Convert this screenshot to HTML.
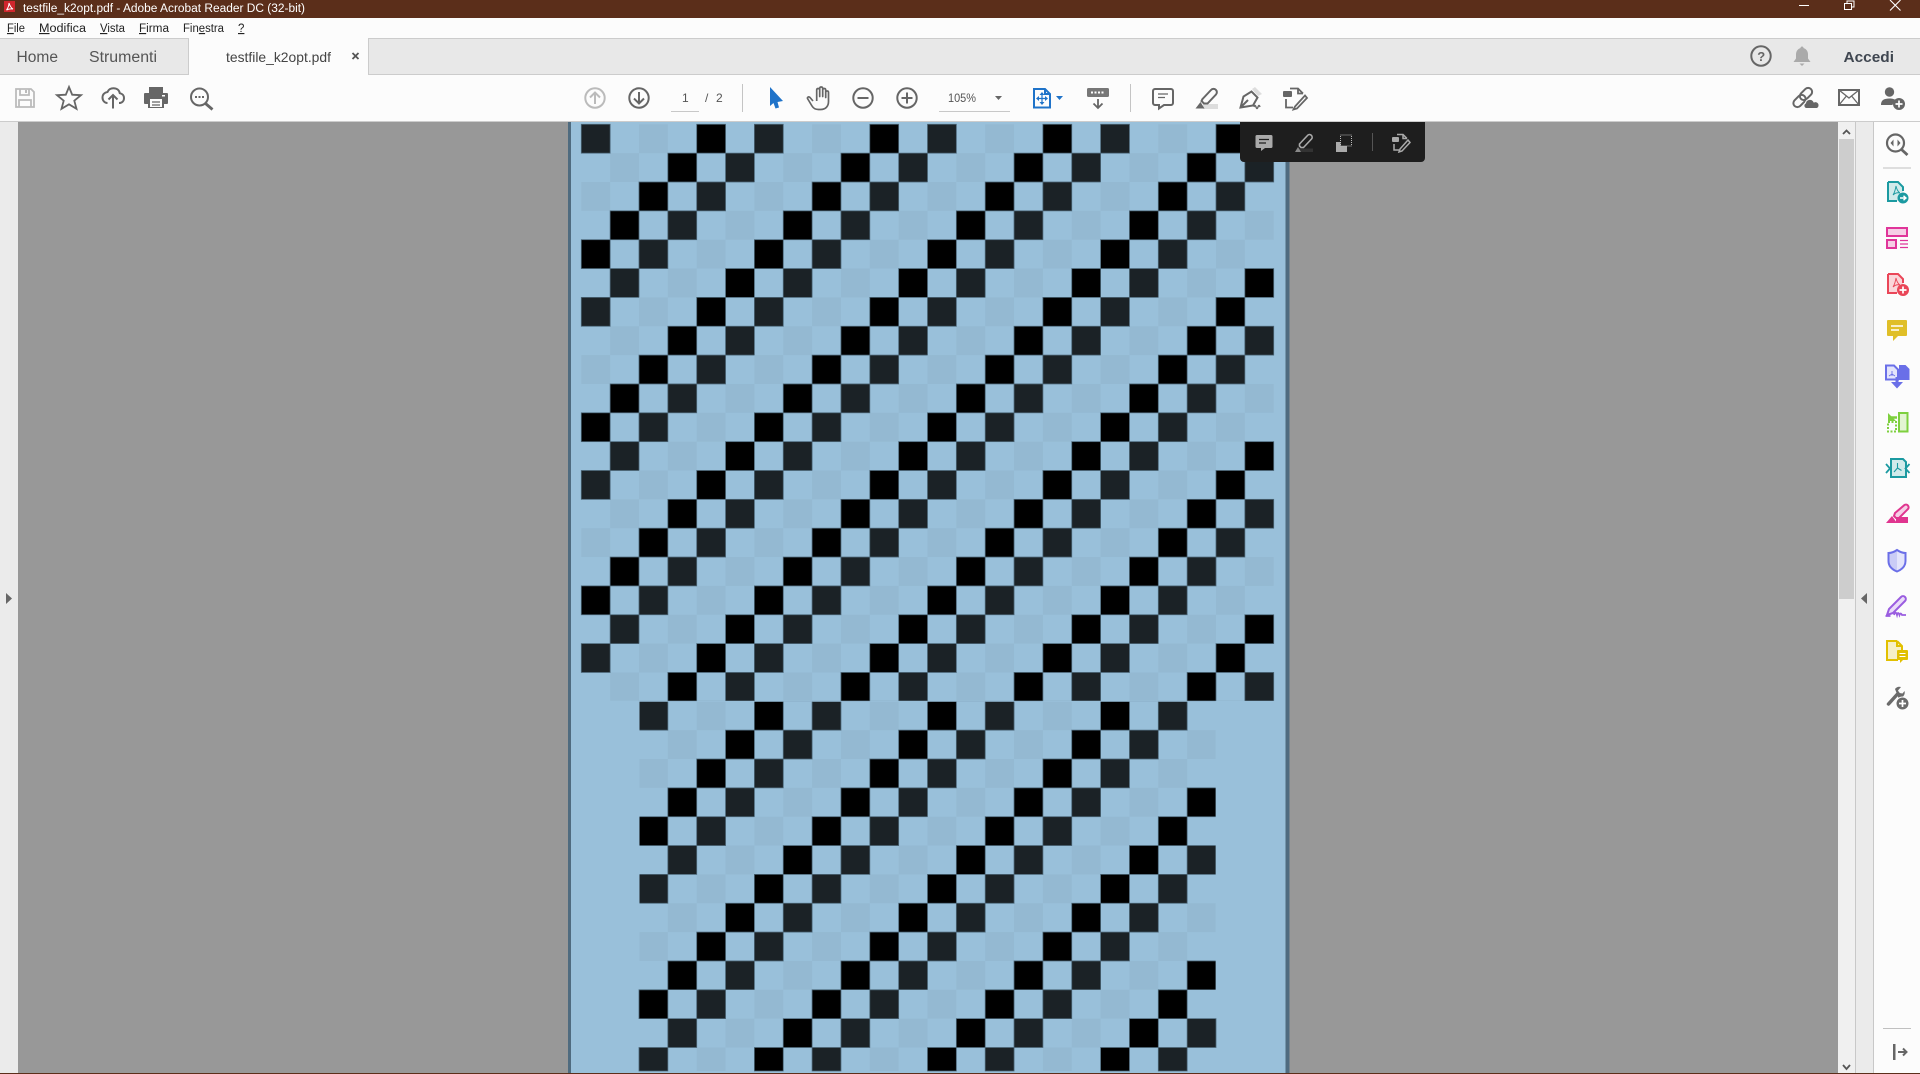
<!DOCTYPE html>
<html lang="it">
<head>
<meta charset="utf-8">
<title>testfile_k2opt.pdf - Adobe Acrobat Reader DC (32-bit)</title>
<style>
html,body{margin:0;padding:0;width:1920px;height:1074px;overflow:hidden;background:#989898}
svg{display:block;position:absolute;left:0;top:0}
text{font-family:"Liberation Sans",sans-serif;white-space:pre}
</style>
</head>
<body>
<svg xmlns="http://www.w3.org/2000/svg" width="1920" height="1074" viewBox="0 0 1920 1074">
<defs>
  <g id="d4"><rect x="115.4" y="0" width="28.85" height="28.85"/><rect x="86.55" y="28.85" width="28.85" height="28.85"/><rect x="57.7" y="57.7" width="28.85" height="28.85"/><rect x="28.85" y="86.55" width="28.85" height="28.85"/><rect x="0" y="115.4" width="28.85" height="28.85"/><rect x="144.25" y="144.25" width="28.85" height="28.85"/></g>
  <g id="d0"><rect x="0" y="0" width="28.85" height="28.85"/><rect x="144.25" y="28.85" width="28.85" height="28.85"/><rect x="115.4" y="57.7" width="28.85" height="28.85"/><rect x="86.55" y="86.55" width="28.85" height="28.85"/><rect x="57.7" y="115.4" width="28.85" height="28.85"/><rect x="28.85" y="144.25" width="28.85" height="28.85"/></g>
  <g id="d2"><rect x="57.7" y="0" width="28.85" height="28.85"/><rect x="28.85" y="28.85" width="28.85" height="28.85"/><rect x="0" y="57.7" width="28.85" height="28.85"/><rect x="144.25" y="86.55" width="28.85" height="28.85"/><rect x="115.4" y="115.4" width="28.85" height="28.85"/><rect x="86.55" y="144.25" width="28.85" height="28.85"/></g>
  <g id="t1"><use href="#d2" fill="#94b9d2"/><use href="#d4" fill="#000" stroke="#4c6677" stroke-width=".8"/><use href="#d0" fill="#1b2226" stroke="#4c6677" stroke-width=".8"/></g>
  <g id="t2"><use href="#d0" fill="#94b9d2"/><use href="#d2" fill="#000" stroke="#4c6677" stroke-width=".8"/><use href="#d4" fill="#1b2226" stroke="#4c6677" stroke-width=".8"/></g>
  <g id="r1"><use href="#t1"/><use href="#t1" x="173.1"/><use href="#t1" x="346.2"/><use href="#t1" x="519.3"/></g>
  <g id="r2"><use href="#t2"/><use href="#t2" x="173.1"/><use href="#t2" x="346.2"/><use href="#t2" x="519.3"/></g>
  <clipPath id="c1"><rect x="580" y="122" width="696" height="578.8"/></clipPath>
  <clipPath id="c2"><rect x="639.5" y="701.8" width="576.1" height="288"/></clipPath>
</defs>

<!-- viewer background -->
<rect x="0" y="0" width="1920" height="1074" fill="#989898"/>
<rect x="0" y="122" width="18" height="952" fill="#ebebeb"/>
<polygon points="6,593 12,598.500 6,604" fill="#666"/>

<!-- page -->
<rect x="568" y="122" width="721.500" height="952" fill="#4f6b7f"/>
<rect x="571" y="122" width="714.500" height="952" fill="#99c0da"/>
<g clip-path="url(#c1)">
  <use href="#r1" x="581.3" y="124.3"/><use href="#r1" x="581.3" y="297.4"/><use href="#r1" x="581.3" y="470.5"/><use href="#r1" x="581.3" y="643.6"/>
</g>
<g clip-path="url(#c2)">
  <use href="#r2" x="581.3" y="643.6"/><use href="#r2" x="581.3" y="816.7"/>
</g>
<!-- rows 30, 31, 32 -->
<path fill="#94b9d2" d="M754.4 989.8h28.85v28.85h-28.85z M927.5 989.8h28.85v28.85h-28.85z M1100.6 989.8h28.85v28.85h-28.85z M725.55 1018.65h28.85v28.85h-28.85z M898.65 1018.65h28.85v28.85h-28.85z M1071.75 1018.65h28.85v28.85h-28.85z M696.7 1047.5h28.85v23.5h-28.85z M869.8 1047.5h28.85v23.5h-28.85z M1042.9 1047.5h28.85v23.5h-28.85z"/>
<path fill="#000" stroke="#4c6677" stroke-width=".8" d="M639 989.8h28.85v28.85h-28.85z M812.1 989.8h28.85v28.85h-28.85z M985.2 989.8h28.85v28.85h-28.85z M1158.3 989.8h28.85v28.85h-28.85z M783.25 1018.65h28.85v28.85h-28.85z M956.35 1018.65h28.85v28.85h-28.85z M1129.45 1018.65h28.85v28.85h-28.85z M754.4 1047.5h28.85v23.5h-28.85z M927.5 1047.5h28.85v23.5h-28.85z M1100.6 1047.5h28.85v23.5h-28.85z"/>
<path fill="#1b2226" stroke="#4c6677" stroke-width=".8" d="M696.7 989.8h28.85v28.85h-28.85z M869.8 989.8h28.85v28.85h-28.85z M1042.9 989.8h28.85v28.85h-28.85z M667.85 1018.65h28.85v28.85h-28.85z M840.95 1018.65h28.85v28.85h-28.85z M1014.05 1018.65h28.85v28.85h-28.85z M1187.15 1018.65h28.85v28.85h-28.85z M639 1047.5h28.85v23.5h-28.85z M812.1 1047.5h28.85v23.5h-28.85z M985.2 1047.5h28.85v23.5h-28.85z M1158.3 1047.5h28.85v23.5h-28.85z"/>

<!-- scrollbar and panels -->
<rect x="1838" y="122" width="17" height="952" fill="#f0f0f0"/>
<rect x="1839" y="139" width="15" height="460" fill="#cdcdcd"/>
<path d="M1843 134 L1846.500 130.500 L1850 134" fill="none" stroke="#555" stroke-width="1.800"/>
<path d="M1843 1065 L1846.500 1069 L1850 1065" fill="none" stroke="#555" stroke-width="1.800"/>
<rect x="1855" y="122" width="1" height="952" fill="#c8c8c8"/>
<rect x="1856" y="122" width="17" height="952" fill="#ebebeb"/>
<rect x="1873" y="122" width="1" height="952" fill="#c8c8c8"/>
<rect x="1874" y="122" width="46" height="952" fill="#fcfcfc"/>
<polygon points="1867,593 1861,598.500 1867,604" fill="#666"/>
<rect x="1883" y="167.500" width="28" height="1" fill="#c0c0c0"/>
<rect x="1883" y="1028" width="28" height="1" fill="#c0c0c0"/>
<rect x="0" y="1073" width="1920" height="1" fill="#5b2e1a"/>

<!-- title bar -->
<rect x="0" y="0" width="1920" height="18" fill="#5b2e1a"/>
<rect x="4" y="1" width="11" height="11" fill="#d0262c"/>
<path d="M6.500 10 C8 8 9 5 9 3 C10 6 11 8 13 9 C10.500 8.500 8.500 9 6.500 10z" fill="none" stroke="#fff" stroke-width="1"/>
<text x="23" y="12" font-size="11.500" fill="#fff" textLength="282" lengthAdjust="spacingAndGlyphs">testfile_k2opt.pdf - Adobe Acrobat Reader DC (32-bit)</text>
<rect x="1799" y="5" width="10" height="1" fill="#fff"/>
<path d="M1844.500 3.500 h7 v6 h-7z M1847 3.500 v-2.500 h7 v6 h-2.500" fill="none" stroke="#fff" stroke-width="1"/>
<path d="M1890 0 L1900.500 10.500 M1900.500 0 L1890 10.500" stroke="#fff" stroke-width="1.100"/>

<!-- menu bar -->
<rect x="0" y="18" width="1920" height="20" fill="#fcfcfc"/>
<rect x="0" y="38" width="1920" height="1" fill="#cccccc"/>
<g font-size="11.500" fill="#222">
  <text x="7" y="32" textLength="18" lengthAdjust="spacingAndGlyphs"><tspan text-decoration="underline">F</tspan>ile</text>
  <text x="39" y="32" textLength="47" lengthAdjust="spacingAndGlyphs"><tspan text-decoration="underline">M</tspan>odifica</text>
  <text x="100" y="32" textLength="25" lengthAdjust="spacingAndGlyphs"><tspan text-decoration="underline">V</tspan>ista</text>
  <text x="139" y="32" textLength="30" lengthAdjust="spacingAndGlyphs"><tspan text-decoration="underline">F</tspan>irma</text>
  <text x="183" y="32" textLength="41" lengthAdjust="spacingAndGlyphs">Fin<tspan text-decoration="underline">e</tspan>stra</text>
  <text x="238" y="32" text-decoration="underline">?</text>
</g>

<!-- tab bar -->
<rect x="0" y="39" width="1920" height="35" fill="#e8e8e8"/>
<rect x="0" y="74" width="1920" height="1" fill="#cccccc"/>
<rect x="188" y="38" width="181" height="37" fill="#cccccc"/>
<rect x="189" y="38" width="179" height="37" fill="#fcfcfc"/>
<text x="16.500" y="62" font-size="15.500" fill="#555" textLength="41.500" lengthAdjust="spacingAndGlyphs">Home</text>
<text x="89" y="62" font-size="15.500" fill="#555" textLength="68" lengthAdjust="spacingAndGlyphs">Strumenti</text>
<text x="226" y="62" font-size="14" fill="#444" textLength="105" lengthAdjust="spacingAndGlyphs">testfile_k2opt.pdf</text>
<path d="M352.500 53 L358.500 59 M358.500 53 L352.500 59" stroke="#555" stroke-width="1.800"/>

<circle cx="1761" cy="56" r="9.700" fill="none" stroke="#666" stroke-width="2"/>
<text x="1757.200" y="61" font-size="13" font-weight="700" fill="#666">?</text>
<path d="M1802 46.500 c-1 0-1.500 .8-1.500 1.500 c-3 1-4.500 3.500-4.500 6.500 v4 l-2.500 3.500 h17 l-2.500-3.500 v-4 c0-3-1.500-5.500-4.500-6.500 c0-.7-.5-1.500-1.500-1.500z M1799.500 63.500 h5 l-2.500 2.500z" fill="#aaa"/>
<text x="1843.500" y="62" font-size="15" font-weight="700" fill="#3f4650" textLength="50.500" lengthAdjust="spacingAndGlyphs">Accedi</text>

<!-- main toolbar -->
<rect x="0" y="75" width="1920" height="46" fill="#fcfcfc"/>
<rect x="0" y="121" width="1920" height="1" fill="#cccccc"/>

<!-- save -->
<path d="M16 89 h15 l3 3 v15 h-18z M20 89 v6 h9 v-6 M19 107 v-7 h12 v7" fill="none" stroke="#bbb" stroke-width="1.800"/>
<rect x="25" y="90" width="2" height="3" fill="#bbb"/>
<!-- star -->
<polygon points="69,87 72.200,94.700 81,95.200 74.300,100.700 76.500,108.800 69,104.300 61.500,108.800 63.700,100.700 57,95.200 65.800,94.700" fill="none" stroke="#666" stroke-width="1.800"/>
<!-- cloud upload -->
<path d="M107.500 103 c-3 0-5-2.500-5-5.500 0-3 2-5 5-5.500 1-2.500 3.500-3.800 5.800-3.800 3.500 0 6 2 6.500 5 2.500.5 4.200 2.300 4.200 4.800 0 3-2 5-5 5" fill="none" stroke="#666" stroke-width="2"/>
<path d="M113 108.500 V95 M108.500 99.500 L113 95 L117.500 99.500" fill="none" stroke="#666" stroke-width="2"/>
<!-- print -->
<path d="M149 87 h14 v6 h4 a1 1 0 0 1 1 1 v9 a1 1 0 0 1-1 1 h-3 v4 h-16 v-4 h-3 a1 1 0 0 1-1-1 v-9 a1 1 0 0 1 1-1 h4z" fill="#666"/>
<rect x="150" y="99" width="12" height="8" fill="#fcfcfc"/>
<path d="M152 102 h8 M152 105 h8" stroke="#666" stroke-width="1.200"/>
<rect x="162" y="95" width="3" height="1.500" fill="#fcfcfc"/>
<!-- find -->
<circle cx="199.500" cy="97" r="8.500" fill="none" stroke="#666" stroke-width="2"/>
<path d="M205.500 103.500 L212.500 109.500" stroke="#666" stroke-width="2.800"/>
<path d="M195 97 h2 M198.500 97 h2 M202 97 h2" stroke="#666" stroke-width="2"/>

<!-- page nav -->
<circle cx="595" cy="98" r="9.700" fill="none" stroke="#bbb" stroke-width="2"/>
<path d="M595 104 V92.500 M590 97.500 L595 92.500 L600 97.500" fill="none" stroke="#bbb" stroke-width="2"/>
<circle cx="639" cy="98" r="9.700" fill="none" stroke="#666" stroke-width="2"/>
<path d="M639 92 V103.500 M634 98.500 L639 103.500 L644 98.500" fill="none" stroke="#666" stroke-width="2"/>
<text x="682" y="102" font-size="12" fill="#555">1</text>
<rect x="671" y="111" width="28" height="1" fill="#c8c8c8"/>
<text x="705" y="102" font-size="12" fill="#555">/</text>
<text x="716" y="102" font-size="12" fill="#555">2</text>
<rect x="742" y="84" width="1" height="28" fill="#c4c4c4"/>

<!-- cursor, hand, zoom -->
<polygon points="770,87 783,101 777.500,102 779,107.500 775.500,108.500 773.500,103 770,106" fill="#1f73c9"/>
<path d="M813 101 l-3-3.500 c-1.500-1.500-3.200 0-2.200 1.500 l4.200 7 c1.500 2.500 3.500 3.500 6.500 3.500 h2 c5 0 8-3 8-8 v-9 c0-2-2.800-2-2.800 0 v5 v-7.500 c0-2-3-2-3 0 v6.500 v-8 c0-2-3-2-3 0 v8 v-6.500 c0-2-3-2-3 0 v11" fill="none" stroke="#666" stroke-width="1.700" stroke-linejoin="round"/>
<circle cx="863" cy="98" r="9.700" fill="none" stroke="#666" stroke-width="2"/>
<path d="M857.500 98 h11" stroke="#666" stroke-width="2"/>
<circle cx="907" cy="98" r="9.700" fill="none" stroke="#666" stroke-width="2"/>
<path d="M901.500 98 h11 M907 92.500 v11" stroke="#666" stroke-width="2"/>
<text x="948" y="102" font-size="12" fill="#555" textLength="28" lengthAdjust="spacingAndGlyphs">105%</text>
<rect x="939" y="111" width="71" height="1" fill="#c8c8c8"/>
<polygon points="995,96 1002,96 998.500,100" fill="#666"/>

<!-- fit page -->
<path d="M1034 89 h11 l5 5 v13.500 h-16z M1045 89 v5 h5" fill="none" stroke="#1f73c9" stroke-width="2"/>
<path d="M1037 98.500 h10 M1042 93.500 v10" stroke="#1f73c9" stroke-width="1.200"/>
<path d="M1042 92 l-2.500 3 h5z M1042 105 l-2.500-3 h5z M1036 98.500 l3-2.500 v5z M1048 98.500 l-3-2.500 v5z" fill="#1f73c9"/>
<polygon points="1056,96 1063,96 1059.500,100" fill="#1f73c9"/>

<!-- read mode -->
<rect x="1087" y="88" width="22" height="9" rx="1.500" fill="#777"/>
<path d="M1091 92.500 h14" stroke="#fff" stroke-width="2" stroke-dasharray="2 1.500"/>
<path d="M1098 99 V107.500 M1093.500 103.500 L1098 108 L1102.500 103.500" fill="none" stroke="#666" stroke-width="1.800"/>
<rect x="1130" y="84" width="1" height="28" fill="#c4c4c4"/>

<!-- comment -->
<path d="M1155 89 h16 a2 2 0 0 1 2 2 v12 a2 2 0 0 1-2 2 h-7 l-5 3.500 v-3.500 h-4 a2 2 0 0 1-2-2 v-12 a2 2 0 0 1 2-2z" fill="none" stroke="#666" stroke-width="2"/>
<path d="M1158 94 h10 M1158 97.500 h7" stroke="#666" stroke-width="1.300"/>
<!-- highlight -->
<rect x="1203" y="104" width="15" height="5" fill="#ddd"/>
<path d="M1202.500 99 L1211 90 a3 3 0 0 1 5 4.500 L1207.500 103.500 h-3.500 l-2.500-2.500z" fill="#fcfcfc" stroke="#666" stroke-width="2"/>
<polygon points="1195.500,108.500 1200.500,102 1204.500,108.500" fill="#666"/>
<!-- pen -->
<polygon points="1252,89 1255,87 1262,94 1258,96" fill="#ddd"/>
<path d="M1240.500 107.500 l3-11 l8-5 l6 6 l-4.500 8 l-12.500 2z M1240.500 107.500 L1248 100" fill="none" stroke="#666" stroke-width="2"/>
<path d="M1254 107 q1-3 2 0 q1 3 2 0 q1-3 2 0" fill="none" stroke="#666" stroke-width="1.400"/>
<!-- edit -->
<rect x="1283" y="91" width="9" height="6" rx="1" fill="#666"/>
<path d="M1290 88.500 h8 l5 5 M1298 88.500 v5 h5 M1286 99 v8.500 h7" fill="none" stroke="#666" stroke-width="1.800"/>
<path d="M1305 95.500 L1295 106.500 L1293.500 109.500 L1297 108.500 L1307 98 z" fill="#fcfcfc" stroke="#666" stroke-width="1.800"/>

<!-- share: chain with cloud -->
<g fill="none" stroke="#666" stroke-width="2">
<rect x="1799" y="90" width="14" height="8" rx="4" transform="rotate(-45 1806 94)"/>
<rect x="1792.500" y="97" width="14" height="8" rx="4" transform="rotate(-45 1799.500 101)"/>
</g>
<path d="M1806 108.500 a3 3 0 0 1-.5-5.500 a4.500 4.500 0 0 1 8.500-1 a3.300 3.300 0 0 1 3 6.500z" fill="#666" stroke="#fcfcfc" stroke-width="1"/>
<rect x="1839" y="90" width="20" height="15" fill="none" stroke="#666" stroke-width="2"/>
<path d="M1839 90 L1849 98 L1859 90 M1839 105 L1846 96.500 M1859 105 L1852 96.500" fill="none" stroke="#666" stroke-width="1.300"/>
<circle cx="1889.500" cy="92" r="4.700" fill="#666"/>
<path d="M1881 105 c0-5 3-6.500 8.500-6.500 c3 0 5 .5 6.500 2 a7 7 0 0 0-3.500 4.500z" fill="#666"/>
<circle cx="1899" cy="104" r="6" fill="#666"/>
<path d="M1895.500 104 h7 M1899 100.500 v7" stroke="#fff" stroke-width="1.700"/>

<!-- dark popup -->
<path d="M1240 122 h185 v36 a4 4 0 0 1-4 4 h-177 a4 4 0 0 1-4-4z" fill="#1e1e1e"/>
<path d="M1257 135 h14 a1.500 1.500 0 0 1 1.500 1.500 v10 a1.500 1.500 0 0 1-1.500 1.500 h-6 l-4 3 v-3 h-4 a1.500 1.500 0 0 1-1.500-1.500 v-10 a1.500 1.500 0 0 1 1.500-1.500z" fill="#aaa"/>
<path d="M1259 139.500 h10 M1259 143 h7" stroke="#1e1e1e" stroke-width="1.300"/>
<rect x="1299" y="148.500" width="14" height="3.500" fill="#333"/>
<path d="M1299.500 144 L1307.500 135.500 a2.500 2.500 0 0 1 4 3.500 L1303.500 147.500 h-2.500 l-1.500-1.500z" fill="none" stroke="#aaa" stroke-width="1.600"/>
<polygon points="1295,152 1298,147 1301,152" fill="#888"/>
<rect x="1336" y="142" width="11" height="10" fill="#aaa"/>
<rect x="1340.500" y="135" width="11" height="11" fill="#1e1e1e" stroke="#bbb" stroke-width="1" stroke-dasharray="1 1"/>
<rect x="1372" y="133" width="1" height="18" fill="#555"/>
<rect x="1392" y="137" width="7" height="5" rx="1" fill="#aaa"/>
<path d="M1397 134.500 h6 l4 4 M1403 134.500 v4 h4 M1394 144 v6 h5" fill="none" stroke="#aaa" stroke-width="1.500"/>
<path d="M1408 140 L1400 149 L1399 152 L1402 151 L1410 142.500z" fill="#1e1e1e" stroke="#aaa" stroke-width="1.500"/>

<!-- right panel tools -->
<circle cx="1895.500" cy="143" r="8.500" fill="none" stroke="#666" stroke-width="2.200"/>
<path d="M1901.500 149.500 L1907.500 155" stroke="#666" stroke-width="2.800"/>
<path d="M1893.500 139.500 l-3 3.500 3 3.500z M1897.500 139.500 l3 3.500-3 3.500z" fill="#666"/>

<!-- export -->
<path d="M1888 182 h10 l5 5 v5 h-3 l-2 9 h-10z" fill="#d0ebeb"/>
<path d="M1888 182 h10 l5 5 v4 M1888 182 v19 h9" fill="none" stroke="#1b9aa1" stroke-width="2"/>
<path d="M1893 195 q2-3 3-9 q1 5 4 7 q-4-1-7 2z" fill="none" stroke="#1b9aa1" stroke-width=".9"/>
<circle cx="1903" cy="198" r="5.500" fill="#1b9aa1"/>
<path d="M1900 198 h5.500 M1903.500 195.800 L1906 198 L1903.500 200.200" fill="none" stroke="#fff" stroke-width="1.400"/>
<!-- forms -->
<rect x="1887" y="228" width="20" height="8" fill="#f6cfe6" stroke="#e0359a" stroke-width="2"/>
<rect x="1887" y="240" width="9" height="8" fill="#f6cfe6" stroke="#e0359a" stroke-width="2"/>
<path d="M1900 240.500 h8 M1900 244 h8 M1900 247.500 h8" stroke="#e0359a" stroke-width="1.200"/>
<!-- create -->
<path d="M1888 274 h10 l5 5 v5 h-3 l-2 9 h-10z" fill="#fad6da"/>
<path d="M1888 274 h10 l5 5 v4 M1888 274 v19 h9" fill="none" stroke="#ea4658" stroke-width="2"/>
<path d="M1893 287 q2-3 3-9 q1 5 4 7 q-4-1-7 2z" fill="none" stroke="#ea4658" stroke-width=".9"/>
<circle cx="1903" cy="290" r="6" fill="#ea4658"/>
<path d="M1899.500 290 h7 M1903 286.500 v7" stroke="#fff" stroke-width="1.700"/>
<!-- comment -->
<path d="M1888 320 h18 a1 1 0 0 1 1 1 v14 a1 1 0 0 1-1 1 h-8 l-5 5 v-5 h-5 a1 1 0 0 1-1-1 v-14 a1 1 0 0 1 1-1z" fill="#e0bf28"/>
<path d="M1891 326 h12 M1891 330 h8" stroke="#fff" stroke-width="1.600"/>
<!-- convert -->
<path d="M1886 365.500 h8 l4 4 v10 h-12z" fill="#e3e4fb" stroke="#6a6fe8" stroke-width="2"/>
<path d="M1899 365 h6.500 l4 4 v11 h-10.500z" fill="#6a6fe8"/>
<path d="M1892 371 v5 M1889 376 l3-2 3 2" fill="none" stroke="#6a6fe8" stroke-width=".9"/>
<path d="M1897 377 v7" stroke="#6a6fe8" stroke-width="3"/>
<polygon points="1891,382 1903,382 1897,388.500" fill="#6a6fe8"/>
<!-- organize -->
<rect x="1899" y="413" width="8.500" height="18.500" fill="#e3f5d2" stroke="#7ed03f" stroke-width="2"/>
<rect x="1888" y="422" width="8" height="9.500" fill="none" stroke="#7ed03f" stroke-width="2" stroke-dasharray="2 1.500"/>
<path d="M1897 417.500 h-7" stroke="#7ed03f" stroke-width="2.500"/>
<polygon points="1888,413 1888,421 1896,421" fill="#7ed03f"/>
<!-- compress -->
<path d="M1891 459 h12 l3 3 v15 h-15z" fill="#d0ebeb" stroke="#1b9aa1" stroke-width="2"/>
<path d="M1886 464 l4 4.500-4 4.500 M1909.500 464 l-4 4.500 4 4.500" fill="none" stroke="#1b9aa1" stroke-width="1.800"/>
<path d="M1897.500 463 v5 M1897.500 468 l-3.500 4 M1897.500 468 l4 2.500" fill="none" stroke="#1b9aa1" stroke-width="1.100"/>
<!-- highlight -->
<path d="M1895 513 L1904.500 505 a2.700 2.700 0 0 1 3.500 4 L1899 518 h-3 l-2-2z" fill="#f6cfe6" stroke="#e0358f" stroke-width="2"/>
<polygon points="1886,523 1892,516 1897,523" fill="#e0358f"/>
<rect x="1896" y="517" width="12" height="6" fill="#e0358f"/>
<!-- shield -->
<path d="M1897 550 c3 2 5.500 3 8.500 3 v8 c0 5-3.500 8.500-8.500 10.500 c-5-2-8.500-5.500-8.500-10.500 v-8 c3 0 5.500-1 8.500-3z" fill="#e3e4fb" stroke="#6b6fe8" stroke-width="2"/>
<path d="M1897 550 c-3 2-5.500 3-8.500 3 v8 c0 5 3.500 8.500 8.500 10.500z" fill="#6b6fe8" opacity=".2"/>
<!-- sign -->
<path d="M1887 615 l2-6 L1901 597 a2.700 2.700 0 0 1 4 4 L1893 613z" fill="#eadcf9" stroke="#9a5de0" stroke-width="2"/>
<path d="M1885.500 616 h5 M1894 615 q1.500-5 3 0 q1-4 2.500 0 q1-3 2.500 0 h4" fill="none" stroke="#9a5de0" stroke-width="1.800"/>
<!-- doc yellow -->
<path d="M1887 641 h10 l5 5 v10 h-4 v4 h-11z" fill="#f6efc6"/>
<path d="M1897 641 h-10 v19 h11 M1897 641 l5 5 v4 M1897 641 v5 h5" fill="none" stroke="#e2c000" stroke-width="2"/>
<path d="M1898 650 h9 a1 1 0 0 1 1 1 v8 a1 1 0 0 1-1 1 h-4 l-3 3 v-3 h-2 a1 1 0 0 1-1-1 v-8 a1 1 0 0 1 1-1z" fill="#e2c000"/>
<path d="M1899.500 653.500 h6 M1899.500 656.500 h6" stroke="#fff" stroke-width="1.100"/>
<!-- wrench -->
<path d="M1888.500 704 L1898 693.500" stroke="#6b6b6b" stroke-width="3.500" stroke-linecap="round"/>
<path d="M1895 689 a5.500 5.500 0 0 1 6-2 l-3 3.500 1.500 2.500 3 .5 2-2.500 a5.500 5.500 0 0 1-6 7z" fill="#6b6b6b"/>
<circle cx="1902.500" cy="703.500" r="6.500" fill="#6b6b6b" stroke="#fcfcfc" stroke-width="1"/>
<path d="M1899 703.500 h7 M1902.500 700 v7" stroke="#fff" stroke-width="1.700"/>
<!-- collapse -->
<rect x="1893" y="1044" width="2.500" height="16" fill="#666"/>
<path d="M1898 1052 h8 M1903 1048.500 L1906.500 1052 L1903 1055.500" fill="none" stroke="#666" stroke-width="2"/>
</svg>
</body>
</html>
